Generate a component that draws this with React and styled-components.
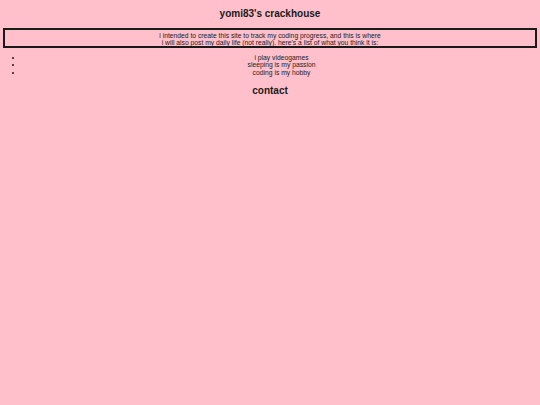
import React from "react";
import styled, { createGlobalStyle } from "styled-components";

const GlobalStyle = createGlobalStyle`
  html, body {
    margin: 0;
    padding: 0;
    background: #ffc0cb;
  }
  body {
    font-family: "Liberation Sans", Arial, sans-serif;
    color: #1a1a1a;
  }
`;

const Page = styled.main`
  min-height: 405px;
  padding-top: 8px;
  text-align: center;
`;

const Title = styled.h1`
  margin: 0;
  font-size: 10px;
  line-height: 12px;
  font-weight: bold;
`;

const Intro = styled.div`
  margin: 8px 3px 0;
  border: 2px solid #1a1a1a;
  padding: 1.5px 0 0;
  font-size: 6.75px;
  line-height: 7px;
`;

const List = styled.ul`
  margin: 6px 0 0;
  padding-left: 23px;
  font-size: 6.75px;
  line-height: 7.5px;
`;

const Item = styled.li`
  text-align: center;
`;

const Heading = styled.h2`
  margin: 9px 0 0;
  font-size: 10px;
  line-height: 12px;
  font-weight: bold;
`;

const things = ["i play videogames", "sleeping is my passion", "coding is my hobby"];

export default function App() {
  return (
    <>
      <GlobalStyle />
      <Page>
        <Title>yomi83's crackhouse</Title>
        <Intro>
          i intended to create this site to track my coding progress, and this is where
          <br />
          i will also post my daily life (not really). here's a list of what you think it is:
        </Intro>
        <List>
          {things.map((t) => (
            <Item key={t}>{t}</Item>
          ))}
        </List>
        <Heading>contact</Heading>
      </Page>
    </>
  );
}
